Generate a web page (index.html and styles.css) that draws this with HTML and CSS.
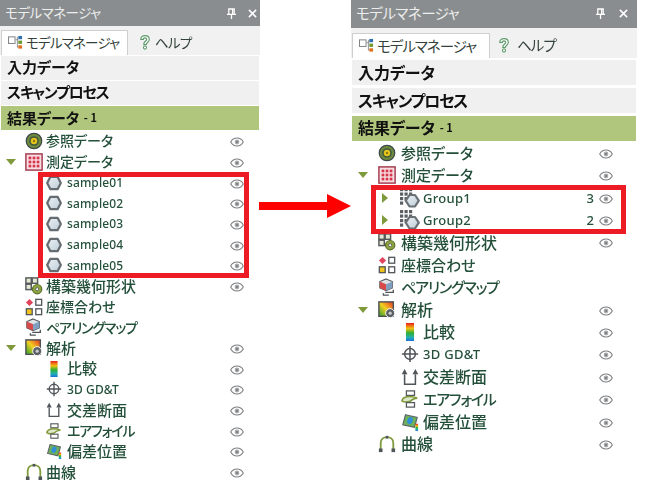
FILE: index.html
```html
<!DOCTYPE html>
<html lang="ja">
<head>
<meta charset="utf-8">
<title>モデルマネージャ</title>
<link rel="stylesheet" href="styles.css">
</head>
<body>
<svg class="defs" width="0" height="0" aria-hidden="true">
  <defs>
    <linearGradient id="rainbow" x1="0" y1="0" x2="0" y2="1">
      <stop offset="0" stop-color="#e8201c"/><stop offset=".3" stop-color="#f2c010"/><stop offset=".55" stop-color="#30b030"/><stop offset=".8" stop-color="#20b0b0"/><stop offset="1" stop-color="#1c70e0"/>
    </linearGradient>
    <linearGradient id="heat" x1="0" y1="1" x2="1" y2="0">
      <stop offset="0" stop-color="#2aa02a"/><stop offset=".5" stop-color="#f2d020"/><stop offset="1" stop-color="#e83020"/>
    </linearGradient>
    <linearGradient id="steel" x1="0" y1="0" x2="1" y2="1">
      <stop offset="0" stop-color="#eef3f7"/><stop offset="1" stop-color="#bccbd6"/>
    </linearGradient>
    <symbol id="i-ref" viewBox="0 0 20 20"><circle cx="10" cy="10" r="8.6" fill="#6f8a3c" stroke="#3e4a4a" stroke-width="1.4"/><circle cx="10" cy="10" r="5.4" fill="#3f5a40"/><circle cx="10" cy="10" r="3.6" fill="#e3c21c"/><circle cx="10" cy="10" r="1.2" fill="#7a6a10"/></symbol>
    <symbol id="i-meas" viewBox="0 0 20 20"><rect x="1" y="1" width="18" height="18" fill="#f6dfe2" stroke="#a3384c" stroke-width="1.6"/><g fill="#d8344c"><rect x="4" y="4" width="3" height="3"/><rect x="8.500" y="4" width="3" height="3"/><rect x="13" y="4" width="3" height="3"/><rect x="4" y="8.500" width="3" height="3"/><rect x="8.500" y="8.500" width="3" height="3"/><rect x="13" y="8.500" width="3" height="3"/><rect x="4" y="13" width="3" height="3"/><rect x="8.500" y="13" width="3" height="3"/><rect x="13" y="13" width="3" height="3"/></g></symbol>
    <symbol id="i-hex" viewBox="0 0 20 20"><path d="M5.500 2.200h9L18.500 10l-4 7.800h-9L1.500 10z" fill="url(#steel)" stroke="#666d72" stroke-width="2.800" stroke-linejoin="round"/></symbol>
    <symbol id="i-group" viewBox="0 0 20 20"><g fill="#5a6064"><rect x="0" y="0" width="3.200" height="3.200"/><rect x="4.500" y="0" width="3.200" height="3.200"/><rect x="9" y="0" width="3.200" height="3.200"/><rect x="0" y="4.500" width="3.200" height="3.200"/><rect x="4.500" y="4.500" width="3.200" height="3.200"/><rect x="9" y="4.500" width="3.200" height="3.200"/><rect x="0" y="9" width="3.200" height="3.200"/><rect x="4.500" y="9" width="3.200" height="3.200"/><rect x="0" y="13.500" width="3.200" height="3.200"/></g><path d="M9.500 7h5.500l3.800 5.700-3.800 5.800H9.500l-3.800-5.800z" fill="url(#steel)" stroke="#6a7176" stroke-width="2.200" stroke-linejoin="round"/></symbol>
    <symbol id="i-build" viewBox="0 0 20 20"><g fill="#e4e8d4" stroke="#55595c" stroke-width="1.600"><rect x="1" y="1" width="6" height="6"/><rect x="8" y="1" width="6" height="6"/><rect x="1" y="8" width="6" height="6"/></g><circle cx="13.500" cy="13.500" r="5.200" fill="#8ba33f" stroke="#5c6e2a" stroke-width="1.300"/><circle cx="13.500" cy="13.500" r="1.700" fill="#fff" stroke="#444" stroke-width=".8"/></symbol>
    <symbol id="i-align" viewBox="0 0 20 20"><path d="M5 1l4 4-4 4-4-4z" fill="#e2445c"/><rect x="12" y="1.500" width="6.500" height="6.500" fill="#fff" stroke="#55595c" stroke-width="1.500"/><rect x="1.500" y="12" width="6.500" height="6.500" fill="#f2c41c" stroke="#55595c" stroke-width="1.500"/><rect x="12" y="12" width="6.500" height="6.500" fill="#fff" stroke="#55595c" stroke-width="1.500"/></symbol>
    <symbol id="i-pair" viewBox="0 0 20 20"><path d="M9 1l7 3v7l-7 3-7-3V4z" fill="#dfe3e6" stroke="#55595c" stroke-width="1.200"/><path d="M2 4l7 3v7l-7-3z" fill="#d84a4a"/><path d="M9 7l7-3v7l-7 3z" fill="#7f9fc0"/><path d="M8 16h9v-3M12 19H6v-2" fill="none" stroke="#50565a" stroke-width="1.500"/></symbol>
    <symbol id="i-ana" viewBox="0 0 20 20"><rect x="1" y="1" width="16" height="16" fill="url(#heat)" stroke="#4d5256" stroke-width="1.600"/><circle cx="13.500" cy="13.500" r="5" fill="#5a5f63" stroke="#fff" stroke-width="1"/><circle cx="13.500" cy="13.500" r="1.800" fill="#c8ccce"/></symbol>
    <symbol id="i-cmp" viewBox="0 0 20 20"><rect x="5.500" y="0" width="9" height="20" fill="url(#rainbow)"/></symbol>
    <symbol id="i-gdt" viewBox="0 0 20 20"><g fill="none" stroke="#50555a" stroke-width="1.700"><circle cx="10" cy="10" r="6"/><path d="M10 1v18M1 10h18"/></g></symbol>
    <symbol id="i-sec" viewBox="0 0 20 20"><path d="M4 7v11h12V7" fill="none" stroke="#50555a" stroke-width="1.700"/><path d="M4 1L.8 7h6.400zM16 1l-3.200 6h6.400z" fill="#50555a"/></symbol>
    <symbol id="i-air" viewBox="0 0 20 20"><rect x="6" y="1" width="9" height="5" fill="#fff" stroke="#55595c" stroke-width="1.400"/><path d="M1 12c1-5 9-6 17-3-5 0-5 2-8 3.500-3 1-7 1-9-.5z" fill="#dfe8c8" stroke="#7f9a3c" stroke-width="1.800"/><rect x="6" y="14" width="9" height="5" fill="#fff" stroke="#55595c" stroke-width="1.400"/></symbol>
    <symbol id="i-dev" viewBox="0 0 20 20"><path d="M5 2l13 3-3 11-13-3z" fill="#6cb05a" stroke="#5b6468" stroke-width="1.300"/><ellipse cx="10" cy="8.500" rx="3" ry="4" transform="rotate(20 10 8.500)" fill="#2f8fd8"/><rect x="16" y="12" width="3" height="8" fill="url(#rainbow)"/></symbol>
    <symbol id="i-curve" viewBox="0 0 20 20"><path d="M3 16V9c0-9 14-9 14 0v7" fill="none" stroke="#7f9a3c" stroke-width="2"/><g fill="#50555a"><rect x="1" y="15" width="4" height="4"/><rect x="15" y="15" width="4" height="4"/><rect x="8.500" y="1" width="3" height="3"/></g></symbol>
    <symbol id="i-eye" viewBox="0 0 20 14"><path d="M1 7c4-7.500 14-7.500 18 0-4 7.500-14 7.500-18 0z" fill="#fff" stroke="#7c7f81" stroke-width="1.500"/><circle cx="10" cy="7" r="3.400" fill="#a9abad"/><circle cx="10" cy="7" r="1.300" fill="#6c6f71"/></symbol>
    <symbol id="i-mm" viewBox="0 0 16 16"><rect x=".5" y="2" width="7" height="7" fill="#fff" stroke="#7a7d80"/><path d="M8 5h3M10 2v11h1" fill="none" stroke="#8a8d90"/><rect x="11" y="1" width="4" height="3.500" fill="#2d6fb0"/><rect x="11" y="6" width="4" height="3.500" fill="#6f9a30"/><rect x="11" y="11" width="4" height="3.500" fill="#e0701c"/></symbol>
    <symbol id="i-help" viewBox="0 0 14 18"><path d="M2 6c0-6 10-6 10 0 0 3-3.500 3.500-3.500 6h-3C5.500 8 9 8 9 6c0-2.500-4-2.500-4 0z" fill="#fff" stroke="#5d9a6a" stroke-width="1.300" stroke-linejoin="round"/><circle cx="7" cy="15.500" r="1.800" fill="#fff" stroke="#5d9a6a" stroke-width="1.200"/></symbol>
    <symbol id="i-pin" viewBox="0 0 10 12"><path d="M2 1h6v6H2zM0 7h10M5 7v5M6.200 1v6" fill="none" stroke="#fff" stroke-width="1.400"/></symbol>
    <symbol id="i-close" viewBox="0 0 10 10"><path d="M1 1l8 8M9 1l-8 8" fill="none" stroke="#fff" stroke-width="1.700"/></symbol>
  </defs>
</svg>

<main class="page">
  <section class="panel panel-before">
    <header class="title"><span class="title-text">モデルマネージャ</span><svg class="btn-pin"><use href="#i-pin"/></svg><svg class="btn-close"><use href="#i-close"/></svg></header>
    <nav class="tabs">
      <div class="tab tab-on"><svg class="tab-icon"><use href="#i-mm"/></svg>モデルマネージャ</div>
      <div class="tab"><svg class="tab-icon help"><use href="#i-help"/></svg>ヘルプ</div>
    </nav>
    <div class="section">入力データ</div>
    <div class="section section-tight">スキャンプロセス</div>
    <div class="section section-on">結果データ<small class="section-count"> - 1</small></div>
    <ul class="tree">
      <li class="row"><svg class="icon"><use href="#i-ref"/></svg><span class="label">参照データ</span><svg class="eye"><use href="#i-eye"/></svg></li>
      <li class="row"><i class="caret"></i><svg class="icon"><use href="#i-meas"/></svg><span class="label">測定データ</span><svg class="eye"><use href="#i-eye"/></svg></li>
      <li class="row child"><svg class="icon"><use href="#i-hex"/></svg><span class="label latin">sample01</span><svg class="eye"><use href="#i-eye"/></svg></li>
      <li class="row child"><svg class="icon"><use href="#i-hex"/></svg><span class="label latin">sample02</span><svg class="eye"><use href="#i-eye"/></svg></li>
      <li class="row child"><svg class="icon"><use href="#i-hex"/></svg><span class="label latin">sample03</span><svg class="eye"><use href="#i-eye"/></svg></li>
      <li class="row child"><svg class="icon"><use href="#i-hex"/></svg><span class="label latin">sample04</span><svg class="eye"><use href="#i-eye"/></svg></li>
      <li class="row child"><svg class="icon"><use href="#i-hex"/></svg><span class="label latin">sample05</span><svg class="eye"><use href="#i-eye"/></svg></li>
      <li class="row"><svg class="icon"><use href="#i-build"/></svg><span class="label kanji">構築幾何形状</span><svg class="eye"><use href="#i-eye"/></svg></li>
      <li class="row"><svg class="icon"><use href="#i-align"/></svg><span class="label">座標合わせ</span></li>
      <li class="row"><svg class="icon"><use href="#i-pair"/></svg><span class="label kana">ペアリングマップ</span></li>
      <li class="row"><i class="caret"></i><svg class="icon"><use href="#i-ana"/></svg><span class="label kanji">解析</span><svg class="eye"><use href="#i-eye"/></svg></li>
      <li class="row child"><svg class="icon"><use href="#i-cmp"/></svg><span class="label kanji">比較</span><svg class="eye"><use href="#i-eye"/></svg></li>
      <li class="row child"><svg class="icon"><use href="#i-gdt"/></svg><span class="label latin">3D GD&amp;T</span><svg class="eye"><use href="#i-eye"/></svg></li>
      <li class="row child"><svg class="icon"><use href="#i-sec"/></svg><span class="label kanji">交差断面</span><svg class="eye"><use href="#i-eye"/></svg></li>
      <li class="row child"><svg class="icon"><use href="#i-air"/></svg><span class="label kana">エアフォイル</span><svg class="eye"><use href="#i-eye"/></svg></li>
      <li class="row child"><svg class="icon"><use href="#i-dev"/></svg><span class="label kanji">偏差位置</span><svg class="eye"><use href="#i-eye"/></svg></li>
      <li class="row"><svg class="icon"><use href="#i-curve"/></svg><span class="label kanji">曲線</span><svg class="eye"><use href="#i-eye"/></svg></li>
    </ul>
    <div class="mark mark-before"></div>
  </section>

  <div class="arrow-col">
    <svg class="arrow" viewBox="0 0 92 24"><path d="M0 8h68V0l24 12-24 12v-8H0z" fill="#ff0000"/></svg>
  </div>

  <section class="panel panel-after">
    <header class="title"><span class="title-text">モデルマネージャ</span><svg class="btn-pin"><use href="#i-pin"/></svg><svg class="btn-close"><use href="#i-close"/></svg></header>
    <nav class="tabs">
      <div class="tab tab-on"><svg class="tab-icon"><use href="#i-mm"/></svg>モデルマネージャ</div>
      <div class="tab"><svg class="tab-icon help"><use href="#i-help"/></svg>ヘルプ</div>
    </nav>
    <div class="section">入力データ</div>
    <div class="section section-tight">スキャンプロセス</div>
    <div class="section section-on">結果データ<small class="section-count"> - 1</small></div>
    <ul class="tree">
      <li class="row"><svg class="icon"><use href="#i-ref"/></svg><span class="label">参照データ</span><svg class="eye"><use href="#i-eye"/></svg></li>
      <li class="row"><i class="caret"></i><svg class="icon"><use href="#i-meas"/></svg><span class="label">測定データ</span><svg class="eye"><use href="#i-eye"/></svg></li>
      <li class="row child group"><i class="caret-closed"></i><svg class="icon"><use href="#i-group"/></svg><span class="label latin">Group1</span><span class="count">3</span><svg class="eye"><use href="#i-eye"/></svg></li>
      <li class="row child group"><i class="caret-closed"></i><svg class="icon"><use href="#i-group"/></svg><span class="label latin">Group2</span><span class="count">2</span><svg class="eye"><use href="#i-eye"/></svg></li>
      <li class="row"><svg class="icon"><use href="#i-build"/></svg><span class="label kanji">構築幾何形状</span><svg class="eye"><use href="#i-eye"/></svg></li>
      <li class="row"><svg class="icon"><use href="#i-align"/></svg><span class="label">座標合わせ</span></li>
      <li class="row"><svg class="icon"><use href="#i-pair"/></svg><span class="label kana">ペアリングマップ</span></li>
      <li class="row"><i class="caret"></i><svg class="icon"><use href="#i-ana"/></svg><span class="label kanji">解析</span><svg class="eye"><use href="#i-eye"/></svg></li>
      <li class="row child"><svg class="icon"><use href="#i-cmp"/></svg><span class="label kanji">比較</span><svg class="eye"><use href="#i-eye"/></svg></li>
      <li class="row child"><svg class="icon"><use href="#i-gdt"/></svg><span class="label latin">3D GD&amp;T</span><svg class="eye"><use href="#i-eye"/></svg></li>
      <li class="row child"><svg class="icon"><use href="#i-sec"/></svg><span class="label kanji">交差断面</span><svg class="eye"><use href="#i-eye"/></svg></li>
      <li class="row child"><svg class="icon"><use href="#i-air"/></svg><span class="label kana">エアフォイル</span><svg class="eye"><use href="#i-eye"/></svg></li>
      <li class="row child"><svg class="icon"><use href="#i-dev"/></svg><span class="label kanji">偏差位置</span><svg class="eye"><use href="#i-eye"/></svg></li>
      <li class="row"><svg class="icon"><use href="#i-curve"/></svg><span class="label kanji">曲線</span><svg class="eye"><use href="#i-eye"/></svg></li>
    </ul>
    <div class="mark mark-after"></div>
  </section>
</main>
</body>
</html>
```
FILE: styles.css
```css
* { box-sizing: border-box; }
html, body { margin: 0; padding: 0; background: #fff; }
body { width: 652px; height: 480px; overflow: hidden; font-family: "Noto Sans CJK JP", "Noto Sans", sans-serif; font-feature-settings: "palt"; }
.defs { position: absolute; }
.page { display: flex; align-items: flex-start; height: 480px; overflow: hidden; }

.panel {
  position: relative; flex: none;
  width: var(--w); color: #24503a;
  filter: blur(.25px);
}
.panel-before {
  --w: 260px; --title-h: 26px; --tabs-h: 28.5px; --tabs-pt: 4px; --tab-w: 127px;
  --sec-h: 23.5px; --sec-gap: 1.6px; --sec-fs: 15px; --fs: 14px; --lat-fs: 12px; --lat-ls: .1px;
  --tree-top: 1px; --row: 20.69px; --caret-x: 6px; --icon: 18px; --icon-x: 25px; --child-x: 46px; --child-icon: 16px;
  --label-x: 46px; --child-label-x: 67px;
  --eye-w: 14px; --eye-h: 10px; --eye-r: 16px; --tab-ls: -.8px;
  --pin-gap: 12px; --close-r: 3px; --help-l: 5px; --help-r: 1px;
}
.panel-after {
  --w: 286px; --title-h: 27.5px; --tabs-h: 30px; --tabs-pt: 5px; --tab-w: 138px;
  --sec-h: 25px; --sec-gap: 2.8px; --sec-fs: 16px; --fs: 15px; --lat-fs: 13px; --lat-ls: .3px;
  --tree-top: .8px; --row: 22.4px; --caret-x: 7px; --icon: 18px; --icon-x: 27px; --child-x: 50px; --child-icon: 18px;
  --label-x: 50px; --child-label-x: 72px;
  --eye-w: 14px; --eye-h: 10px; --eye-r: 24px; --tab-ls: -1px;
  --pin-gap: 14px; --close-r: 9px; --help-l: 2px; --help-r: 4px;
}

.title {
  display: flex; align-items: center; height: var(--title-h);
  background: #8a8d8f; padding-left: 5px;
}
.title-text { flex: 1; color: #eceded; font-size: calc(var(--fs) - .5px); letter-spacing: -.5px; padding-bottom: 2px; }
.btn-pin { width: 9px; height: 11px; margin-right: var(--pin-gap); }
.btn-close { width: 9px; height: 9px; margin-right: var(--close-r); }

.tabs {
  display: flex; align-items: stretch; height: var(--tabs-h); padding: var(--tabs-pt) 0 0 1px;
  background: #f1f1f1;
}
.tab { display: flex; align-items: center; gap: 3px; padding: 0 0 1px 6px; color: #33423a; font-size: calc(var(--fs) - .5px); letter-spacing: var(--tab-ls); white-space: nowrap; }
.tab-on { width: var(--tab-w); background: #fff; border: 1px solid #cfcfcf; border-bottom: 0; }
.tab-icon { width: 15px; height: 15px; flex: none; }
.help { width: 12px; height: 16px; margin: 0 var(--help-r) 0 var(--help-l); }

.section {
  display: flex; align-items: center; height: var(--sec-h); margin: var(--sec-gap) 1px 0;
  padding: 0 0 2px 6px; background: #f0f0f0; color: #111; font-weight: 700; font-size: var(--sec-fs);
}
.section-tight { letter-spacing: -1.25px; }
.section-on { background: #b0c67c; }
.section-count { font-size: 11px; font-weight: 700; margin-left: 2px; white-space: pre; }

.tree { list-style: none; margin: var(--tree-top) 0 0; padding: 0; }
.row {
  position: relative; display: flex; align-items: center; height: var(--row);
  padding-left: var(--label-x); padding-right: var(--eye-r); font-size: var(--fs);
}
.row.child { padding-left: var(--child-label-x); }
.label { flex: 1; white-space: nowrap; padding-bottom: 1.5px; font-weight: 500; }
.kana { letter-spacing: -1.2px; }
.kanji { font-size: calc(var(--fs) + 1px); }
.latin { font-family: "Noto Sans", sans-serif; font-size: var(--lat-fs); letter-spacing: var(--lat-ls); padding-bottom: 0; }
.count { font-family: "Noto Sans", sans-serif; font-size: var(--lat-fs); font-weight: 500; margin-right: 5px; }
.icon { position: absolute; left: var(--icon-x); top: calc((var(--row) - var(--icon)) / 2); width: var(--icon); height: var(--icon); }
.child .icon { left: var(--child-x); width: var(--child-icon); height: var(--child-icon); top: calc((var(--row) - var(--child-icon)) / 2); }
.group .icon { left: 49px; width: 20px; height: 20px; top: calc((var(--row) - 20px) / 2); }
.eye { width: var(--eye-w); height: var(--eye-h); flex: none; margin-top: 2px; }
.caret {
  position: absolute; left: var(--caret-x); top: calc(var(--row) / 2 - 3px);
  border-style: solid; border-width: 6px 5px 0; border-color: #7f9a3c transparent transparent;
}
.caret-closed {
  position: absolute; left: 31px; top: calc(var(--row) / 2 - 5px);
  border-style: solid; border-width: 5px 0 5px 6px; border-color: transparent transparent transparent #7f9a3c;
}

.mark { position: absolute; border: 5px solid #ed1c24; pointer-events: none; }
.mark-before { left: 38px; top: 172px; width: 211px; height: 106px; }
.mark-after { left: 20px; top: 185px; width: 255px; height: 49px; }

.arrow-col { flex: none; width: 92px; padding-top: 194px; margin-left: -1px; }
.arrow { display: block; width: 92px; height: 24px; }
```
